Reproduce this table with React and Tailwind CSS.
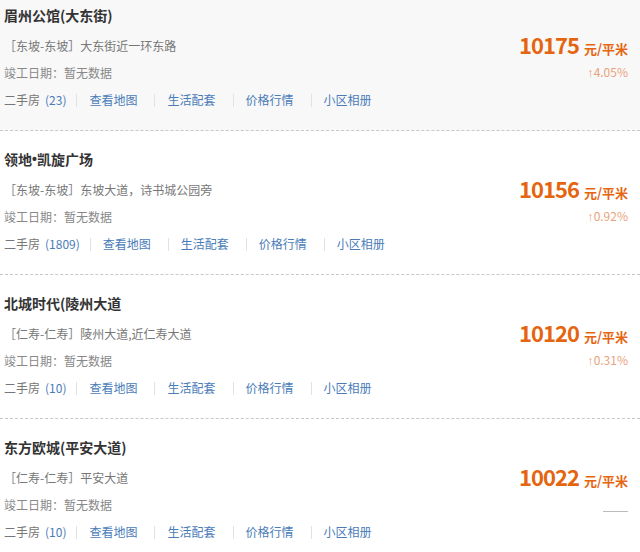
import React from 'react';

const items = [
    { name: ['眉州公馆(大东街)'], area: '东坡-东坡', addr: '大东街近一环东路', count: 23, price: 10175, change: '4.05%' },
    { name: ['领地', '凯旋广场'], area: '东坡-东坡', addr: '东坡大道，诗书城公园旁', count: 1809, price: 10156, change: '0.92%' },
    { name: ['北城时代(陵州大道'], area: '仁寿-仁寿', addr: '陵州大道,近仁寿大道', count: 10, price: 10120, change: '0.31%' },
    { name: ['东方欧城(平安大道)'], area: '仁寿-仁寿', addr: '平安大道', count: 10, price: 10022, change: null },
];

const links = ['查看地图', '生活配套', '价格行情', '小区相册'];
const latin = { fontFamily: '"Liberation Sans", sans-serif' };

function Card({ item, first }) {
    return (
        <div className={`border-b border-dashed border-[#c8c8c8] pl-1 pr-3 pb-[19px] ${first ? 'bg-[#f8f8f8] pt-[5px]' : 'bg-white pt-[18px]'}`}>
            {/* Title */}
            <div className="h-5 flex items-center text-[14px] font-bold text-[#333]">
                {item.name[0]}
                {item.name[1] && <><span style={latin}>•</span>{item.name[1]}</>}
            </div>

            {/* Address + price */}
            <div className="mt-[10px] h-[22px] flex items-center justify-between">
                <span className="text-[12px] text-[#777]">［{item.area}］{item.addr}</span>
                <span className="flex items-baseline text-[#e5650f] font-bold -mt-1">
                    <span className="text-[22px] leading-none tracking-[-1px]">{item.price}</span>
                    <span className="text-[13px] ml-[5px] leading-none">元/平米</span>
                </span>
            </div>

            {/* Date + change */}
            <div className="mt-[5px] h-[22px] flex items-center justify-between">
                <span className="text-[12px] text-[#888]">竣工日期：暂无数据</span>
                {item.change ? (
                    <span className="text-[12px] text-[#e9a27c]"><span className="text-[13px]" style={latin}>↑</span>{item.change}</span>
                ) : (
                    <span className="w-[25px] h-px bg-[#bbb] mt-3" />
                )}
            </div>

            {/* Links */}
            <div className="mt-[5px] h-[22px] flex items-center text-[12px]">
                <span className="text-[#777]">二手房<span className="text-[#4a7cb8] ml-[5px]">({item.count})</span></span>
                {links.map((l) => (
                    <span key={l} className="flex items-center">
                        <span className="ml-[10px] mr-[12px] w-px h-[13px] bg-[#e2e2e2]" />
                        <span className="text-[#4a7cb8] pr-[7px]">{l}</span>
                    </span>
                ))}
            </div>
        </div>
    );
}

export default function App() {
    return (
        <div className="w-[640px] h-[552px] overflow-hidden bg-white" style={{ fontFamily: '"Noto Sans CJK SC", "Noto Sans", sans-serif' }}>
            {items.map((item, i) => (
                <Card key={item.name[0]} item={item} first={i === 0} />
            ))}
        </div>
    );
}
